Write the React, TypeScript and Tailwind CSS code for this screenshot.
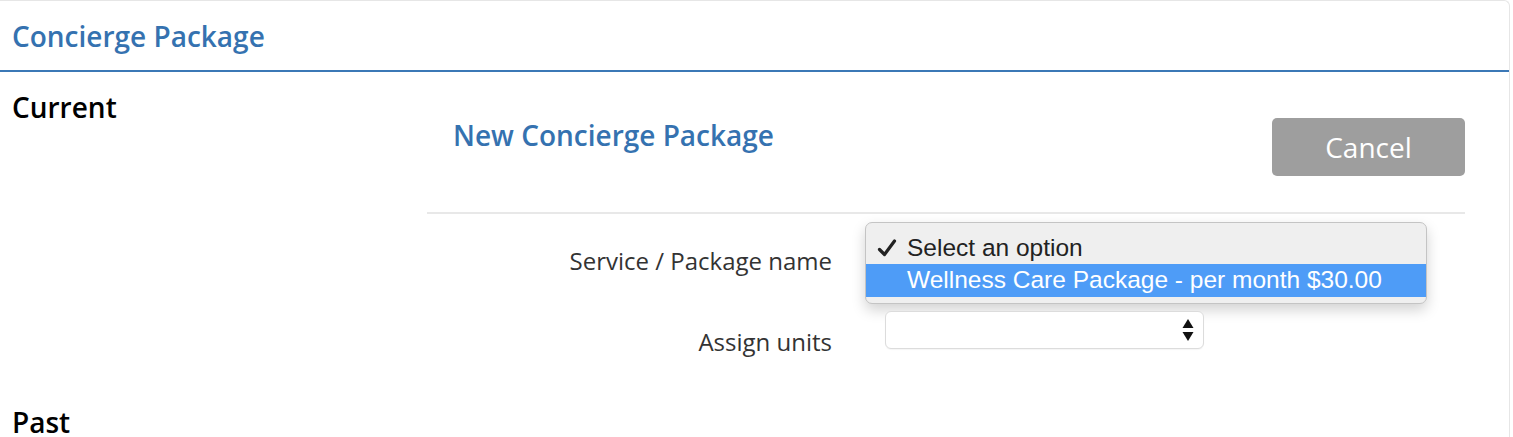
const openSans = { fontFamily: '"Open Sans", "Liberation Sans", sans-serif' };

function UpDownArrows() {
  return (
    <svg width="12" height="24" viewBox="0 0 12 24" className="shrink-0">
      <path d="M6 1 L11.5 10 L0.5 10 Z" fill="#111" />
      <path d="M6 23 L11.5 14 L0.5 14 Z" fill="#111" />
    </svg>
  );
}

function CheckMark() {
  return (
    <svg width="20" height="18" viewBox="0 0 20 18" className="ml-[11px]">
      <path d="M2.5 10.5 L7.5 15.5 L17.5 2" fill="none" stroke="#222" strokeWidth="3.2" strokeLinecap="round" strokeLinejoin="round" />
    </svg>
  );
}

function OpenSelectMenu() {
  return (
    <div
      className="absolute left-[-20px] top-[-8px] w-[562px] rounded-[7px] border border-[#c4c4c4] bg-[#efefef] pt-[9px] pb-[6px] shadow-[0_6px_14px_rgba(0,0,0,0.18)]"
      style={{ fontFamily: '"Liberation Sans", Arial, sans-serif' }}
    >
      <div className="flex h-[32px] items-center text-[24.5px] text-[#222]">
        <span className="flex w-[41px] items-center">
          <CheckMark />
        </span>
        <span>Select an option</span>
      </div>
      <div className="flex h-[33px] items-center bg-[#4e9cf7] text-[24.5px] text-white">
        <span className="w-[41px]" />
        <span>Wellness Care Package - per month $30.00</span>
      </div>
    </div>
  );
}

function SelectBox({ open }: { open?: boolean }) {
  return (
    <div className="relative h-[38px] w-[319px]">
      <div className="flex h-full items-center justify-end rounded-[6px] border border-[#dcdcdc] bg-white pr-[9px] shadow-[0_1px_1px_rgba(0,0,0,0.04)]">
        <UpDownArrows />
      </div>
      {open && <OpenSelectMenu />}
    </div>
  );
}

function FormRow({ label, children, className }: { label: string; children: React.ReactNode; className?: string }) {
  return (
    <div className={`flex h-[38px] items-start ${className ?? ''}`}>
      <label className="mt-[14px] w-[405px] text-right text-[24px] leading-[33px] text-[#333]">{label}</label>
      <div className="ml-[53px]">{children}</div>
    </div>
  );
}

export default function App() {
  return (
    <div className="h-[437px] w-[1513px] overflow-hidden bg-white" style={openSans}>
      <div className="h-full w-[1510px] rounded-tr-[6px] border-r border-t border-[#e6e6e6]">
        <div className="flex h-[71px] items-center border-b-2 border-[#3b78b6] px-3 pt-[1px]">
          <h2 className="text-[28px] leading-[38px] font-semibold text-[#3572b0]">Concierge Package</h2>
        </div>

        <div className="grid grid-cols-[415px_1038px] px-3 pt-[16px]">
          <h3 className="text-[28px] leading-[38px] font-semibold text-black">Current</h3>

          <div className="pt-[30px]">
            <div className="flex items-start justify-between border-b-2 border-[#e8e8e8] pb-[36px]">
              <h3 className="mt-[-2px] pl-[26px] text-[28px] leading-[38px] font-semibold text-[#3572b0]">New Concierge Package</h3>
              <button className="h-[58px] w-[193px] rounded-[5px] bg-[#9e9e9e] text-[28px] text-white">Cancel</button>
            </div>

            <div className="pt-[16px]">
              <FormRow label="Service / Package name">
                <SelectBox open />
              </FormRow>
              <FormRow label="Assign units" className="mt-[43px]">
                <SelectBox />
              </FormRow>
            </div>
          </div>

          <h3 className="col-span-2 mt-[54px] text-[28px] leading-[38px] font-semibold text-black">Past</h3>
        </div>
      </div>
    </div>
  );
}
